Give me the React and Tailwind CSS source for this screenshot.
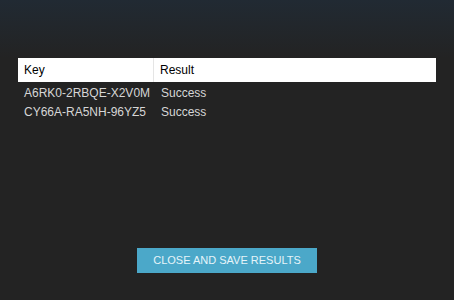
export default function App() {
  const rows = [
    { key: "A6RK0-2RBQE-X2V0M", result: "Success" },
    { key: "CY66A-RA5NH-96YZ5", result: "Success" },
  ];
  return (
    <div
      className="w-[454px] h-[300px] bg-[#232323] flex flex-col text-[12px]"
      style={{ fontFamily: '"Liberation Sans", Arial, sans-serif' }}
    >
      <div className="h-[58px] bg-gradient-to-b from-[#212a33] to-[#232323] shrink-0" />
      <div className="px-[18px]">
        <div className="flex h-[24px] bg-white text-black items-center">
          <div className="w-[136px] h-full pl-[6px] flex items-center border-r border-[#e5e5e5]">Key</div>
          <div className="pl-[6px] flex items-center">Result</div>
        </div>
        <div className="pt-[1px]">
          {rows.map((r) => (
            <div key={r.key} className="flex h-[19px] items-center text-[#d6d6d6]">
              <div className="w-[137px] pl-[6px]">{r.key}</div>
              <div className="pl-[6px]">{r.result}</div>
            </div>
          ))}
        </div>
      </div>
      <div className="flex-1" />
      <div className="flex justify-center pb-[27px]">
        <button className="w-[180px] h-[25px] bg-[#4ba8c9] text-[#e6f4f9] text-[11px] uppercase">
          Close and save results
        </button>
      </div>
    </div>
  );
}
